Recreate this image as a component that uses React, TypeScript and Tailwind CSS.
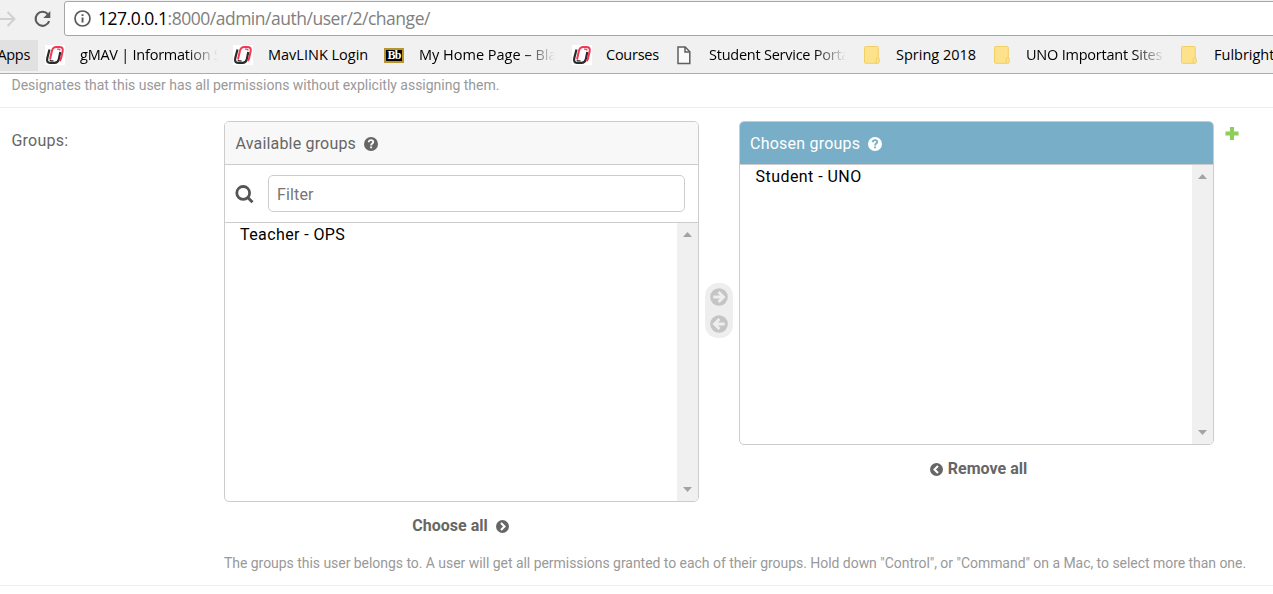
import React from "react";

const chromeFont = "font-['Open_Sans','Noto_Sans',sans-serif]";

function Reload() {
  return (
    <svg width="20" height="20" viewBox="0 0 20 20" fill="none">
      <path d="M16.2 12.2A7 7 0 1 1 14.9 5.2" stroke="#5a5a5a" strokeWidth="2.1" />
      <path d="M17.300 2v7h-7z" fill="#5a5a5a" />
    </svg>
  );
}

function MavLogo() {
  return (
    <svg width="20" height="20" viewBox="0 0 20 20" fill="none" className="shrink-0">
      <rect width="20" height="20" fill="#fff" />
      <path d="M4.500 4.500L2.300 13Q1.200 17.800 5 17.800h4.500Q13 17.800 13.800 14.200L15.300 7" stroke="#2b2b2b" strokeWidth="2.200" />
      <path d="M5.100 14L6.900 6Q7.800 2 11.300 2h3Q18.500 2 17.700 6l-1.600 7.300Q15.700 15 14.600 16" stroke="#ee3a55" strokeWidth="2" />
      <path d="M5.200 14.500Q5 15.900 6.800 15.900h1.700" stroke="#2b2b2b" strokeWidth="1.300" />
      <path d="M12 4.200h1.800q1.200 0 1.100 1.300" stroke="#ee3a55" strokeWidth="1.300" />
    </svg>
  );
}

function BbLogo() {
  return (
    <span className="flex h-[15px] w-5 shrink-0 items-center justify-center border-2 border-[#b8942e] bg-black font-['Liberation_Serif',serif] text-[12px] leading-none font-bold tracking-[-0.8px] text-white">
      Bb
    </span>
  );
}

function PageIcon() {
  return (
    <svg width="14" height="19" viewBox="0 0 14 19" fill="none" stroke="#5f5f5f" strokeWidth="1.5" className="shrink-0">
      <path d="M1 1h7.200L12.800 5.700V17.500H1z" fill="#fafafa" />
      <path d="M8 1v5h5" />
    </svg>
  );
}

function Folder() {
  return (
    <svg width="16" height="18" viewBox="0 0 16 18" className="shrink-0">
      <rect x=".5" y=".5" width="13.800" height="16.800" rx="1" fill="#fee28b" stroke="#f1cf67" />
      <rect x="12.200" y="12" width="3" height="5.300" rx="1" fill="#fee28b" stroke="#f1cf67" />
    </svg>
  );
}

function Question({ color, mark }: { color: string; mark: string }) {
  return (
    <svg width="14" height="14" viewBox="0 0 14 14" fill="none">
      <circle cx="7" cy="7" r="7" fill={color} />
      <path d="M4.700 5.300C4.800 3.800 5.700 3.100 7 3.100c1.300 0 2.200.8 2.200 1.900C9.200 6.600 7.100 6.500 7.100 8.400" stroke={mark} strokeWidth="1.900" />
      <path d="M6.100 9.400h2v1.900h-2z" fill={mark} />
    </svg>
  );
}

function Chevron({ left = false }: { left?: boolean }) {
  return (
    <svg width="13" height="13" viewBox="0 0 13 13" fill="none" className={left ? "rotate-180" : ""}>
      <circle cx="6.500" cy="6.500" r="6.500" fill="#666" />
      <path d="M5 3l3.500 3.500L5 10" stroke="#fff" strokeWidth="2.100" />
    </svg>
  );
}

function MoveArrow({ left = false }: { left?: boolean }) {
  return (
    <svg width="18" height="18" viewBox="0 0 18 18" fill="none" className={left ? "rotate-180" : ""}>
      <circle cx="9" cy="9" r="8.800" fill="#c5c5c5" />
      <path d="M3.300 9h9.500M8.500 3.900L13.600 9l-5.100 5.100" stroke="#eee" strokeWidth="2.800" />
    </svg>
  );
}

function Scrollbar() {
  return (
    <div className="flex w-[21px] flex-col items-center justify-between bg-[#f0f0f0] pt-[9px] pb-[9px]">
      <svg width="9" height="5" viewBox="0 0 9 5"><path d="M0 5L4.500 0 9 5z" fill="#a3a3a3" /></svg>
      <svg width="9" height="5" viewBox="0 0 9 5"><path d="M0 0L4.500 5 9 0z" fill="#a3a3a3" /></svg>
    </div>
  );
}

type BookmarkProps = {
  icon: React.ReactNode;
  label: string;
  item: string;
  iconBox: string;
  text?: string;
  fade?: boolean;
};

function Bookmark({ icon, label, item, iconBox, text = "", fade = false }: BookmarkProps) {
  return (
    <div className={`flex h-full shrink-0 items-center ${item}`}>
      <div className={`flex shrink-0 items-center ${iconBox}`}>{icon}</div>
      <span className={`overflow-hidden whitespace-nowrap ${text} ${fade ? "[mask-image:linear-gradient(to_right,#000_calc(100%-32px),transparent)]" : ""}`}>
        {label}
      </span>
    </div>
  );
}

export default function App() {
  return (
    <div className="flex h-[594px] w-full flex-col overflow-hidden bg-white font-['Roboto',sans-serif]">
      <header className={`h-[74px] shrink-0 border-b border-[#adadad] bg-[#f1f1f1] ${chromeFont}`}>
        <div className="flex h-[37px] items-start">
          <div className="flex w-8 shrink-0 pt-[10px]">
            <svg width="16" height="18" viewBox="0 0 16 18" fill="none" stroke="#d0d0d0" strokeWidth="2">
              <path d="M0 9h14M7.500 2l7 7-7 7" />
            </svg>
          </div>
          <div className="w-8 shrink-0 pt-[9px] pl-px"><Reload /></div>
          <div className="mt-px flex h-[35px] w-[1230px] shrink-0 items-center rounded-l-[3px] border border-[#a6a6a6] bg-white pl-[9px]">
            <svg width="17" height="17" viewBox="0 0 17 17" fill="none">
              <circle cx="8.500" cy="8.500" r="7.500" stroke="#5a5a5a" strokeWidth="1.700" />
              <path d="M7.600 7.500h1.900v5H7.600zM7.600 4.200h1.900v1.900H7.600z" fill="#5a5a5a" />
            </svg>
            <span className="ml-[7px] text-[17.500px] tracking-[-0.480px] whitespace-nowrap text-[#808080]">
              <span className="text-black">127.0.0.1</span>:8000/admin/auth/user/2/change/
            </span>
          </div>
        </div>
        <nav className="flex h-9 items-center overflow-hidden text-[14.500px] text-black">
          <div className="mt-[3px] flex h-[31px] w-[38px] shrink-0 items-center justify-end self-start overflow-hidden bg-[#e1e1e1] pr-2 pb-px tracking-[-0.3px]">
            <span>Apps</span>
          </div>
          <Bookmark icon={<MavLogo />} label="gMAV | Information Systems" item="ml-[7px] w-[188px]" iconBox="w-[35px]" text="w-[138px] tracking-[-0.240px]" fade />
          <Bookmark icon={<MavLogo />} label="MavLINK Login" item="w-[151px]" iconBox="w-[35px]" />
          <Bookmark icon={<BbLogo />} label="My Home Page – Blackboard" item="w-[188px]" iconBox="w-[35px]" text="w-[136px]" fade />
          <Bookmark icon={<MavLogo />} label="Courses" item="w-[105px]" iconBox="w-[34px]" text="tracking-[-0.250px]" />
          <Bookmark icon={<PageIcon />} label="Student Service Portal" item="w-[187px]" iconBox="w-[32px]" text="w-[137px] tracking-[-0.240px]" fade />
          <Bookmark icon={<Folder />} label="Spring 2018" item="w-[130px]" iconBox="w-[32px]" />
          <Bookmark icon={<Folder />} label="UNO Important Sites" item="w-[187px]" iconBox="w-[32px]" text="w-[139px] tracking-[-0.220px]" fade />
          <Bookmark icon={<Folder />} label="Fulbright" item="w-[110px]" iconBox="w-[33px]" />
        </nav>
      </header>

      <main className="flex grow flex-col">
        <p className="h-[34px] border-b border-[#eee] pl-[11.500px] text-[14px] leading-[23px] tracking-[-0.015px] text-[#999]">
          Designates that this user has all permissions without explicitly assigning them.
        </p>
        <section className="flex h-[478px] shrink-0 border-b border-[#eee] pt-[13px]">
          <div className="w-[224px] shrink-0 pt-2 pl-[11.500px] text-[16px] leading-6 tracking-[0.220px] text-[#666]">Groups:</div>
          <div className="flex flex-col">
            <div className="flex">
              <div className="flex w-[475px] flex-col">
                <div className="flex h-[381px] flex-col overflow-hidden rounded-[5px] border border-[#ccc]">
                  <h2 className="flex h-[43px] shrink-0 items-center gap-2 border-b border-[#ccc] bg-[#f8f8f8] pt-px pl-[10.500px] text-[16px] tracking-[0.180px] text-[#666]">
                    <span>Available groups</span>
                    <Question color="#666" mark="#f8f8f8" />
                  </h2>
                  <div className="flex h-[58px] shrink-0 items-center border-b border-[#ccc] pl-[10px]">
                    <svg width="19" height="19" viewBox="0 0 19 19" fill="none" stroke="#555" className="mt-px mr-[14px]">
                      <circle cx="8.200" cy="7.900" r="6.400" strokeWidth="2.800" />
                      <path d="M12.500 12.300l5 5" strokeWidth="3" />
                    </svg>
                    <input placeholder="Filter" className="h-[37px] w-[417px] rounded-[5px] border border-[#ccc] px-2 pt-0.5 text-[16px] tracking-[0.150px] outline-none placeholder:text-[#757575]" />
                  </div>
                  <div className="flex grow justify-between text-[16px] tracking-[0.400px] text-black">
                    <div className="pl-[15px] leading-6">Teacher - OPS</div>
                    <Scrollbar />
                  </div>
                </div>
                <div className="mt-3 mr-[2px] flex h-6 items-center justify-center gap-2 text-[16px] font-bold text-[#666]">
                  <span>Choose all</span><Chevron />
                </div>
              </div>
              <div className="mx-[6px] mt-[162px] flex h-[55px] w-7 flex-col items-center justify-center gap-[9px] rounded-[13px] bg-[#eee]">
                <MoveArrow /><MoveArrow left />
              </div>
              <div className="flex w-[475px] flex-col">
                <div className="flex h-[324px] flex-col overflow-hidden rounded-[5px] border border-[#ccc]">
                  <h2 className="flex h-[43px] shrink-0 items-center gap-2 border-b border-[#ccc] bg-[#79aec8] pt-px pl-[10px] text-[16px] tracking-[0.220px] text-white">
                    <span>Chosen groups</span>
                    <Question color="#fff" mark="#79aec8" />
                  </h2>
                  <div className="flex grow justify-between text-[16px] tracking-[0.450px] text-black">
                    <div className="pl-[15.500px] leading-6">Student - UNO</div>
                    <Scrollbar />
                  </div>
                </div>
                <div className="mt-3 ml-1 flex h-6 items-center justify-center gap-[5px] text-[16px] font-bold text-[#666]">
                  <Chevron left /><span>Remove all</span>
                </div>
              </div>
              <svg width="14" height="14" viewBox="0 0 14 14" className="mt-[5px] ml-[11px]">
                <path d="M5 1h4v4.500h4.500v4H9V14H5V9.500H.5v-4H5z" fill="#8cce58" />
              </svg>
            </div>
            <p className="mt-[13px] text-[14px] leading-6 tracking-[-0.042px] whitespace-nowrap text-[#999]">
              The groups this user belongs to. A user will get all permissions granted to each of their groups. Hold down "Control", or "Command" on a Mac, to select more than one.
            </p>
          </div>
        </section>
      </main>
    </div>
  );
}
